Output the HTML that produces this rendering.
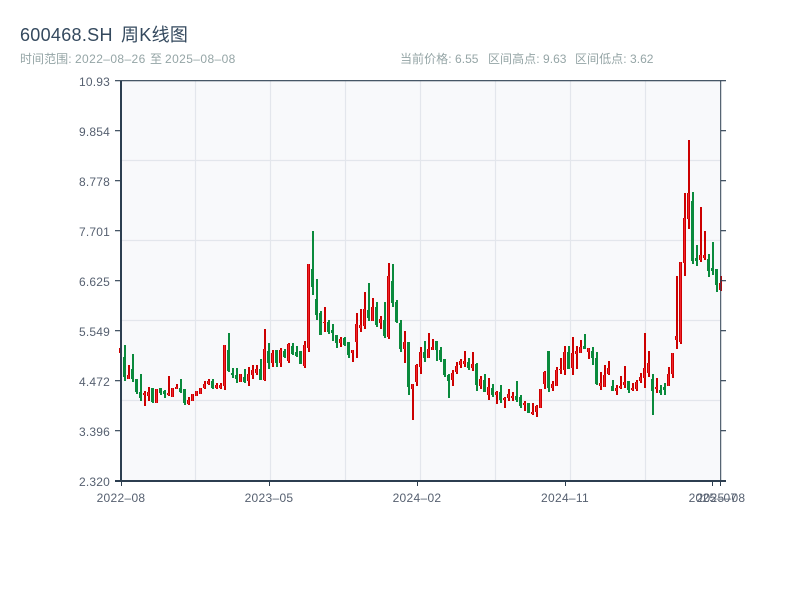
<!DOCTYPE html>
<html lang="zh"><head><meta charset="utf-8"><title>600468.SH 周K线图</title>
<style>
html,body{margin:0;padding:0;background:#fff;width:800px;height:600px;overflow:hidden}
svg{display:block}
text{font-family:"Liberation Sans","Noto Sans CJK SC",sans-serif}
.t{font-size:18px;fill:#34495e;letter-spacing:.3px}
.s{font-size:12px;fill:#95a5a6;letter-spacing:.05px}
.d{letter-spacing:.4px}
.y{font-size:12px;fill:#566070;text-anchor:end;letter-spacing:.2px}
.x{font-size:12px;fill:#566070;text-anchor:middle;letter-spacing:.3px}
</style></head><body>
<svg width="800" height="600" viewBox="0 0 800 600" xmlns="http://www.w3.org/2000/svg">
<defs>
<path id="rb" d="M120 348V353M128 375V379M144 393V395M148 392V396M156 389V403M168 393V395M172 388V397M176 387V389M188 400V404M192 394V401M196 391V396M200 388V394M204 384V388M208 381V384M216 385V388M220 385V388M224 345V386M240 374V382M248 374V381M252 370V375M256 369V373M264 349V380M272 353V363M280 350V363M288 344V361M304 345V366M308 264V348M324 322V323M340 339V343M352 350V353M356 324V342M360 325V328M364 309V326M372 307V321M380 319V323M388 276V337M404 342V349M412 384V389M416 365V382M420 352V367M428 349V358M432 347V350M452 373V380M456 366V372M460 361V365M464 361V364M472 364V368M480 379V386M488 387V395M496 392V395M504 398V400M508 394V398M512 396V398M524 403V405M532 412V414M536 406V412M540 389V408M544 372V384M552 384V388M556 370V386M560 369V370M564 352V370M572 353V368M576 351V354M580 347V353M588 348V352M600 383V386M604 375V387M608 368V374M616 388V391M620 386V388M624 382V385M632 388V390M636 382V389M640 377V381M644 368V378M648 363V373M656 387V389M668 374V386M672 353V374M676 336V340M680 262V342M684 218V263M688 193V219M700 255V260M704 255V258M720 283V290"/>
</defs>
<rect x="121" y="81" width="599" height="399" fill="#f8f9fb"/>
<path d="M195.500 81V480M270.500 81V480M345.500 81V480M420.500 81V480M495.500 81V480M570.500 81V480M645.500 81V480M121 160.500H720M121 240.500H720M121 320.500H720M121 400.500H720" stroke="#e3e6ec" stroke-width="1.2" fill="none"/>
<g fill="none">
<path transform="translate(1 0)" stroke="#cc0000" stroke-width="2" d="M120 348V353M128 365V379M144 391V406M148 387V401M156 389V403M168 376V396M172 388V397M176 384V389M188 397V405M192 394V401M196 391V396M200 388V394M204 381V389M208 379V385M216 383V389M220 383V389M224 345V390M240 374V382M248 367V386M252 365V379M256 365V375M264 329V381M272 350V367M280 348V367M288 343V363M304 341V368M308 264V352M324 307V332M340 337V347M352 350V362M356 313V358M360 309V332M364 292V329M372 298V321M380 316V329M388 263V339M404 331V363M412 384V420M416 364V386M420 347V374M428 333V358M432 339V350M452 370V386M456 362V374M460 359V368M464 351V367M472 352V371M480 376V389M488 378V400M496 391V404M504 397V408M508 389V401M512 392V401M524 401V411M532 403V415M536 405V417M540 389V408M544 371V389M552 381V391M556 367V386M560 358V374M564 346V375M572 337V375M576 346V369M580 340V353M588 348V359M600 372V390M604 365V387M608 361V375M616 385V395M620 376V389M624 366V388M632 383V391M636 380V391M640 373V383M644 333V388M648 351V377M656 378V393M668 367V386M672 353V378M676 276V349M680 262V344M684 193V276M688 140V229M700 207V262M704 231V260M720 276V291"/>
<g transform="translate(.5 0)">
<use href="#rb" stroke="#cc0000" stroke-width="3"/>
<use href="#rb" stroke="#f0242c" stroke-width="1"/>
</g>
<path transform="translate(1 0)" stroke="#0a8a3c" stroke-width="2" d="M124 345V381M132 354V382M136 379V394M140 374V401M152 388V403M160 388V395M164 390V398M180 379V393M184 389V405M212 379V389M228 333V372M232 368V378M236 368V383M244 369V383M260 359V380M268 343V369M276 350V367M284 349V358M292 343V355M296 346V357M300 351V364M312 231V295M316 279V320M320 311V335M328 320V334M332 324V341M336 335V348M344 337V346M348 342V358M368 283V321M376 302V327M384 302V338M392 264V307M396 300V323M400 320V352M408 342V395M424 341V362M436 341V361M440 347V362M444 359V377M448 374V398M468 358V370M476 363V391M484 374V392M492 384V397M500 385V403M516 381V402M520 395V408M528 403V413M548 351V392M568 346V369M584 334V349M592 347V365M596 352V385M612 380V391M628 381V393M652 374V415M660 385V395M664 383V395M692 192V264M696 245V266M708 254V277M712 242V275M716 269V292"/>
<path transform="translate(.5 0)" stroke="#0a8a3c" stroke-width="3" d="M124 357V377M132 369V379M136 379V392M140 392V398M152 388V402M160 388V393M164 391V394M180 388V392M184 389V403M212 381V388M228 350V371M232 373V375M236 375V379M244 377V382M260 369V380M268 351V363M276 350V363M284 351V357M292 346V354M296 352V356M300 351V364M312 269V287M316 299V315M320 313V335M328 322V332M332 330V333M336 335V343M344 338V345M348 342V355M368 310V318M376 307V325M384 320V336M392 281V303M396 302V322M400 323V349M408 342V387M424 352V358M436 341V350M440 350V360M444 359V375M448 375V381M468 362V368M476 364V385M484 380V392M492 388V395M500 392V400M516 396V400M520 397V406M528 403V413M548 351V388M568 352V369M584 346V349M592 351V358M596 358V384M612 386V391M628 381V390M652 379V391M660 390V393M664 387V390M692 201V261M696 258V261M708 259V271M712 268V271M716 269V285"/>
</g>
<path d="M115 81H726M115 131H120M115 181H120M115 231H120M115 281H120M115 331H120M115 381H120M115 431H120M721 131H726M721 181H726M721 231H726M721 281H726M721 331H726M721 381H726M721 431H726" transform="translate(0 -.3)" stroke="#2c3e50" stroke-width="1.2" fill="none"/>
<path d="M721 81V481" stroke="#2c3e50" stroke-width="1" fill="none" transform="translate(-.3 0)"/>
<path d="M121 80.500V482" stroke="#2c3e50" stroke-width="2" fill="none"/>
<path d="M115 481H726" stroke="#2c3e50" stroke-width="2" fill="none"/>
<path d="M121.500 481V486M269.500 481V486M417.500 481V486M565.500 481V486M712.500 481V486M720.500 481V486" stroke="#2c3e50" stroke-width="1" fill="none"/>
<text class="t" x="20" y="41">600468.SH<tspan x="121">周K线图</tspan></text>
<text class="s" x="20" y="63">时间范围: <tspan class="d">2022–08–26</tspan></text>
<text class="s" x="150" y="63">至 <tspan class="d" x="165">2025–08–08</tspan></text>
<text class="s" x="400" y="63">当前价格: 6.55</text>
<text class="s" x="488" y="63">区间高点: 9.63</text>
<text class="s" x="575" y="63">区间低点: 3.62</text>
<text class="y" x="110" y="86">10.93</text>
<text class="y" x="110" y="136">9.854</text>
<text class="y" x="110" y="186">8.778</text>
<text class="y" x="110" y="236">7.701</text>
<text class="y" x="110" y="286">6.625</text>
<text class="y" x="110" y="336">5.549</text>
<text class="y" x="110" y="386">4.472</text>
<text class="y" x="110" y="436">3.396</text>
<text class="y" x="110" y="486">2.320</text>
<text class="x" x="121" y="502">2022–08</text>
<text class="x" x="269" y="502">2023–05</text>
<text class="x" x="417" y="502">2024–02</text>
<text class="x" x="565" y="502">2024–11</text>
<text class="x" x="713" y="502">2025–07</text>
<text class="x" x="721" y="502">2025–08</text>
</svg>
</body></html>
